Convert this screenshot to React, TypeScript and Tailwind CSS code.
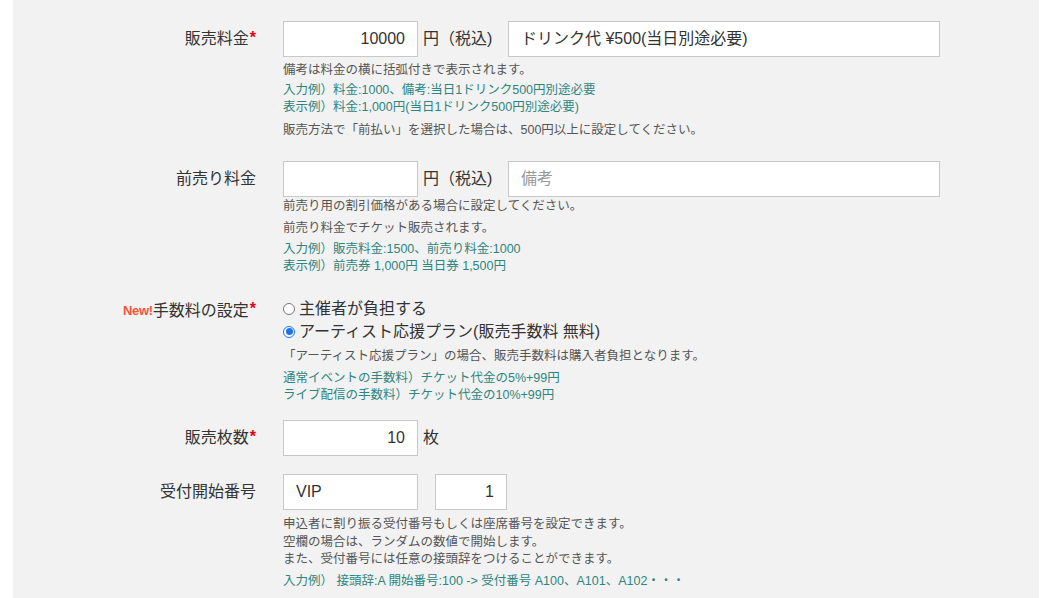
import React from 'react';

const FONT = { fontFamily: '"Liberation Sans", "Noto Sans CJK JP", sans-serif' };

function Label({ children, required }: { children: React.ReactNode; required?: boolean }) {
  return (
    <div className="w-[243px] shrink-0 h-[36px] flex items-center justify-end text-[16px] text-[#333]">
      {children}
      {required && <span className="text-[#e60012] text-[16px] leading-none ml-[1px] -mt-[3px] font-bold">*</span>}
    </div>
  );
}

function TextBox({ value, placeholder, width, right }: { value?: string; placeholder?: string; width: string; right?: boolean }) {
  return (
    <div
      className={
        'h-[36px] bg-white border border-[#c8c8c8] flex items-center px-[12px] text-[16px] text-[#333] ' +
        width +
        (right ? ' justify-end' : '')
      }
    >
      {value ? <span>{value}</span> : <span className="text-[#999]">{placeholder}</span>}
    </div>
  );
}

function Radio({ checked, children }: { checked?: boolean; children: React.ReactNode }) {
  return (
    <div className="flex items-center h-[23px] text-[16px] text-[#333]">
      {checked ? (
        <span className="w-[12px] h-[12px] rounded-full border border-[#1a73e8] bg-white flex items-center justify-center mr-[4px]">
          <span className="w-[7px] h-[7px] rounded-full bg-[#1a73e8]" />
        </span>
      ) : (
        <span className="w-[12px] h-[12px] rounded-full border border-[#777] bg-white mr-[4px]" />
      )}
      <span>{children}</span>
    </div>
  );
}

export default function App() {
  return (
    <div className="w-[1048px] h-[598px] bg-white overflow-hidden" style={FONT}>
      <div className="ml-[13px] w-[1026px] h-[598px] bg-[#f2f2f2] pt-[21px]">
        {/* 販売料金 */}
        <div className="flex">
          <Label required>販売料金</Label>
          <div className="pl-[27px]">
            <div className="flex items-center">
              <TextBox value="10000" width="w-[135px]" right />
              <span className="ml-[5px] text-[16px] text-[#333] w-[85px]">円（税込)</span>
              <TextBox value="ドリンク代 ¥500(当日別途必要)" width="w-[432px]" />
            </div>
            <div className="text-[12.5px] leading-[17px]">
              <p className="mt-[5px] text-[#555]">備考は料金の横に括弧付きで表示されます。</p>
              <div className="mt-[3px] text-[#2e8580]">
                <p>入力例）料金:1000、備考:当日1ドリンク500円別途必要</p>
                <p>表示例）料金:1,000円(当日1ドリンク500円別途必要)</p>
              </div>
              <p className="mt-[6px] text-[#555]">販売方法で「前払い」を選択した場合は、500円以上に設定してください。</p>
            </div>
          </div>
        </div>

        {/* 前売り料金 */}
        <div className="flex mt-[22px]">
          <Label>前売り料金</Label>
          <div className="pl-[27px]">
            <div className="flex items-center">
              <TextBox width="w-[135px]" right />
              <span className="ml-[5px] text-[16px] text-[#333] w-[85px]">円（税込)</span>
              <TextBox placeholder="備考" width="w-[432px]" />
            </div>
            <div className="text-[12.5px] leading-[17px]">
              <p className="mt-[1px] text-[#555]">前売り用の割引価格がある場合に設定してください。</p>
              <p className="mt-[5px] text-[#555]">前売り料金でチケット販売されます。</p>
              <div className="mt-[4px] text-[#2e8580]">
                <p>入力例）販売料金:1500、前売り料金:1000</p>
                <p>表示例）前売券 1,000円 当日券 1,500円</p>
              </div>
            </div>
          </div>
        </div>

        {/* 手数料の設定 */}
        <div className="flex mt-[22px]">
          <div className="w-[243px] shrink-0 h-[23px] flex items-center justify-end text-[16px] text-[#333] mt-[2px]">
            <span className="text-[#f4553b] text-[13px] font-bold tracking-[-0.3px]">New!</span>
            手数料の設定
            <span className="text-[#e60012] text-[16px] leading-none ml-[1px] -mt-[3px] font-bold">*</span>
          </div>
          <div className="pl-[27px]">
            <Radio>主催者が負担する</Radio>
            <Radio checked>アーティスト応援プラン(販売手数料 無料)</Radio>
            <div className="text-[12.5px] leading-[17px]">
              <p className="mt-[5px] text-[#555]">「アーティスト応援プラン」の場合、販売手数料は購入者負担となります。</p>
              <div className="mt-[5px] text-[#2e8580]">
                <p>通常イベントの手数料）チケット代金の5%+99円</p>
                <p>ライブ配信の手数料）チケット代金の10%+99円</p>
              </div>
            </div>
          </div>
        </div>

        {/* 販売枚数 */}
        <div className="flex mt-[16px]">
          <Label required>販売枚数</Label>
          <div className="pl-[27px] flex items-center">
            <TextBox value="10" width="w-[135px]" right />
            <span className="ml-[5px] text-[16px] text-[#333]">枚</span>
          </div>
        </div>

        {/* 受付開始番号 */}
        <div className="flex mt-[18px]">
          <Label>受付開始番号</Label>
          <div className="pl-[27px]">
            <div className="flex items-center gap-[17px]">
              <TextBox value="VIP" width="w-[135px]" />
              <TextBox value="1" width="w-[72px]" right />
            </div>
            <div className="text-[12.5px] leading-[17.5px]">
              <div className="mt-[6px] text-[#555]">
                <p>申込者に割り振る受付番号もしくは座席番号を設定できます。</p>
                <p>空欄の場合は、ランダムの数値で開始します。</p>
                <p>また、受付番号には任意の接頭辞をつけることができます。</p>
              </div>
              <p className="mt-[4px] text-[#2e8580]">入力例） 接頭辞:A 開始番号:100 -&gt; 受付番号 A100、A101、A102・・・</p>
            </div>
          </div>
        </div>
      </div>
    </div>
  );
}
